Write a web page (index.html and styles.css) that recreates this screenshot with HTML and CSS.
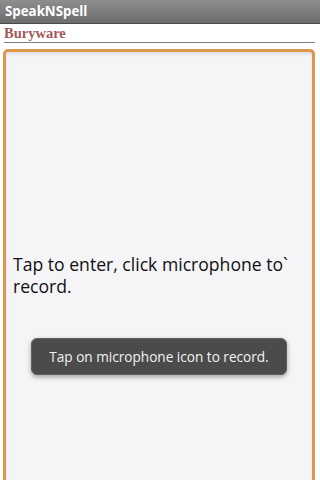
FILE: index.html
```html
<!DOCTYPE html>
<html>
<head>
<meta charset="utf-8">
<link rel="stylesheet" href="styles.css">
</head>
<body>
<div class="titlebar">SpeakNSpell</div>
<div class="brand">Buryware</div>
<div class="rule"></div>
<div class="editor">
  <div class="entry">Tap to enter, click microphone to` record.</div>
  <div class="toast">Tap on microphone icon to record.</div>
</div>
</body>
</html>
```
FILE: styles.css
```css
html, body {
  margin: 0;
  padding: 0;
  width: 320px;
  height: 480px;
  background: #ffffff;
  overflow: hidden;
  font-family: "Open Sans", "DejaVu Sans", sans-serif;
}
.titlebar {
  height: 24px;
  box-sizing: border-box;
  background: linear-gradient(#8e8e8e, #6c6c6c);
  border-bottom: 1px solid #4a4a4a;
  color: #ffffff;
  font-weight: bold;
  font-size: 13.3px;
  line-height: 23px;
  padding-left: 5px;
}
.brand {
  font-family: "Liberation Serif", serif;
  font-weight: bold;
  font-size: 14.5px;
  color: #a3595a;
  padding-left: 4px;
  height: 18px;
  line-height: 18px;
}
.rule {
  margin: 0 5px 0 4px;
  height: 1px;
  background: #7a7e86;
}
.editor {
  position: relative;
  margin: 6px 5px 0 3px;
  height: 440px;
  box-sizing: border-box;
  border: 3px solid #e0964a;
  border-bottom: none;
  border-radius: 5px 5px 0 0;
  background: #f5f4f6;
  display: flex;
  align-items: center;
  box-shadow: inset 0 3px 3px #e2e4ea;
}
.entry {
  padding: 0 8px 0 7px;
  font-size: 17.6px;
  line-height: 22px;
  color: #111111;
  margin-top: 8px;
}
.toast {
  position: absolute;
  left: 25px;
  top: 286px;
  width: 256px;
  height: 37px;
  box-sizing: border-box;
  background: #4b4b4b;
  border: 1px solid #606060;
  border-radius: 6px;
  box-shadow: 0 2px 5px rgba(0,0,0,0.35);
  color: #f2f2f2;
  font-size: 13.6px;
  display: flex;
  align-items: center;
  justify-content: center;
}
```
